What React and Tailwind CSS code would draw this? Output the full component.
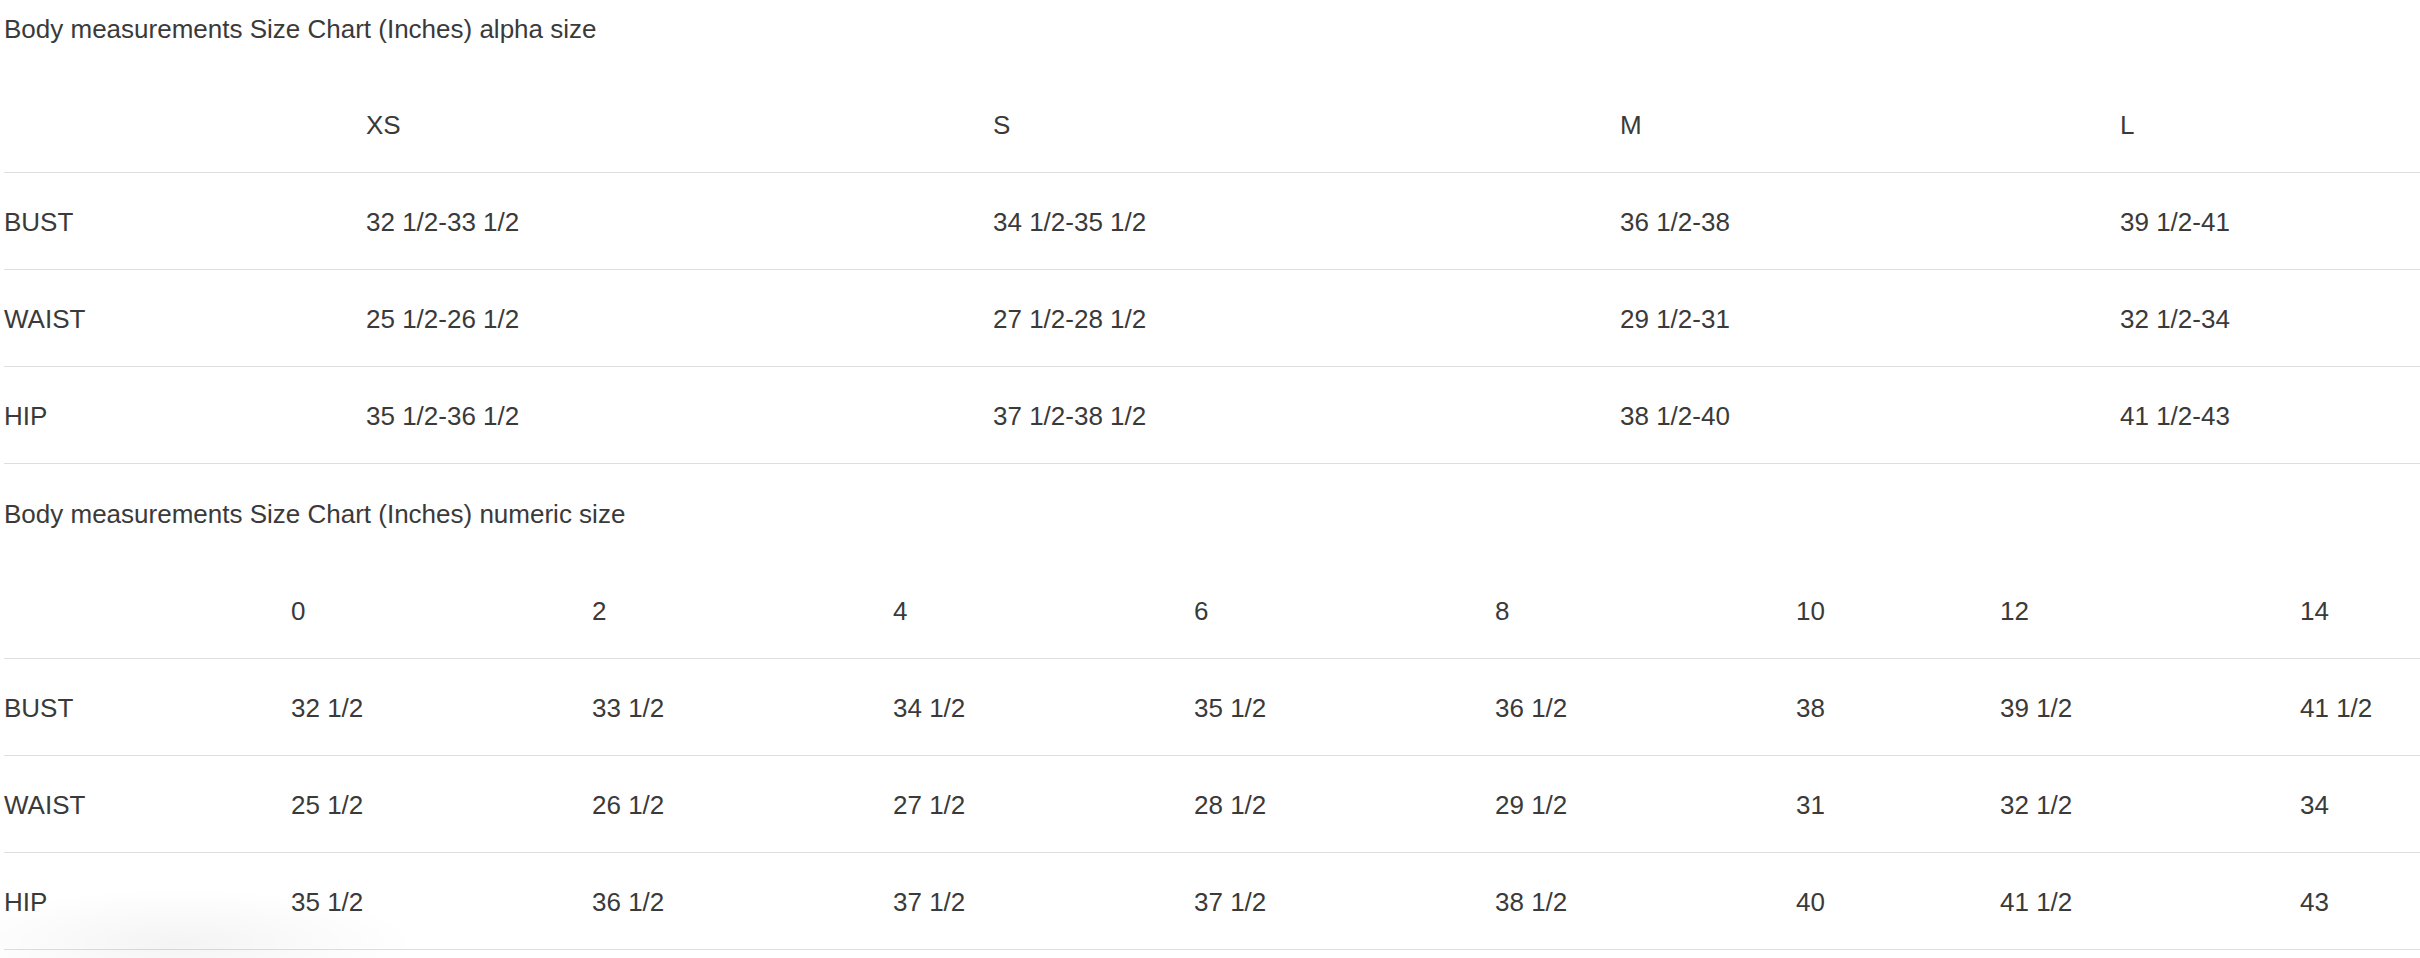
// Body measurement size charts: alpha sizes and numeric sizes

const alpha = {
  cols: ['w-[362px]', 'w-[627px]', 'w-[627px]', 'w-[500px]', 'w-[400px]'],
  head: ['', 'XS', 'S', 'M', 'L'],
  rows: [
    ['BUST', '32 1/2-33 1/2', '34 1/2-35 1/2', '36 1/2-38', '39 1/2-41'],
    ['WAIST', '25 1/2-26 1/2', '27 1/2-28 1/2', '29 1/2-31', '32 1/2-34'],
    ['HIP', '35 1/2-36 1/2', '37 1/2-38 1/2', '38 1/2-40', '41 1/2-43'],
  ],
}

const numeric = {
  cols: [
    'w-[287px]', 'w-[301px]', 'w-[301px]', 'w-[301px]', 'w-[301px]',
    'w-[301px]', 'w-[204px]', 'w-[300px]', 'w-[240px]',
  ],
  head: ['', '0', '2', '4', '6', '8', '10', '12', '14'],
  rows: [
    ['BUST', '32 1/2', '33 1/2', '34 1/2', '35 1/2', '36 1/2', '38', '39 1/2', '41 1/2'],
    ['WAIST', '25 1/2', '26 1/2', '27 1/2', '28 1/2', '29 1/2', '31', '32 1/2', '34'],
    ['HIP', '35 1/2', '36 1/2', '37 1/2', '37 1/2', '38 1/2', '40', '41 1/2', '43'],
  ],
}

// ── One table row ─────────────────────────────────────────────────────────────
function Row({ cells, cols }) {
  return (
    <div className="flex h-[97px] w-max items-center border-b border-[#dedede] pt-[3px]">
      {cells.map((c, i) => (
        <div key={i} className={`${cols[i]} shrink-0 whitespace-nowrap`}>
          {c}
        </div>
      ))}
    </div>
  )
}

function SizeChart({ title, data, first }) {
  return (
    <section>
      <p className={`${first ? 'pt-[10px] pb-[28px]' : 'pt-[31px] pb-[29px]'} leading-[38px]`}>
        {title}
      </p>
      <Row cells={data.head} cols={data.cols} />
      {data.rows.map((r) => (
        <Row key={r[0]} cells={r} cols={data.cols} />
      ))}
    </section>
  )
}

export default function App() {
  return (
    <main className="relative h-[958px] w-[2420px] overflow-hidden bg-white pl-[4px] font-['Liberation_Sans',Arial,sans-serif] text-[26px] text-[#3a3a3a]">
      <SizeChart
        first
        title="Body measurements Size Chart (Inches) alpha size"
        data={alpha}
      />
      <SizeChart
        title="Body measurements Size Chart (Inches) numeric size"
        data={numeric}
      />
      {/* soft shadow of a floating widget, bottom-left */}
      <div className="pointer-events-none absolute bottom-[-40px] left-[-60px] h-[110px] w-[480px] bg-[radial-gradient(ellipse_at_center,rgba(0,0,0,0.045),transparent_70%)]" />
    </main>
  )
}
